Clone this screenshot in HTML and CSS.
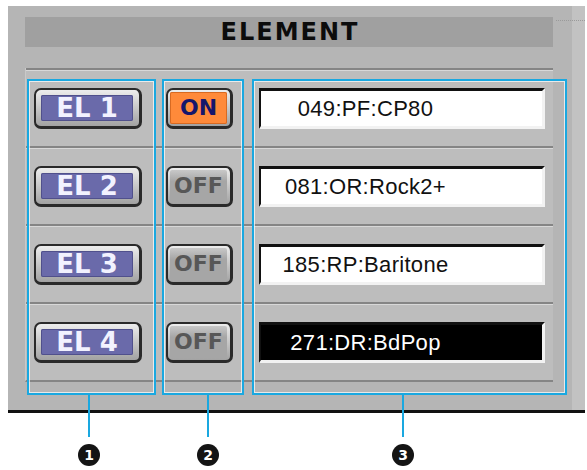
FILE: index.html
```html
<!DOCTYPE html>
<html>
<head>
<meta charset="utf-8">
<title>ELEMENT</title>
<link rel="stylesheet" href="styles.css">
</head>
<body>
<div class="page">
  <div class="panel">
    <div class="head-row">
      <div class="header">ELEMENT</div>
      <div class="dots"></div>
    </div>
    <div class="rows">
      <div class="row">
        <div class="btn el"><div class="face">EL 1</div></div>
        <div class="btn sw on"><div class="face">ON</div></div>
        <div class="field">049:PF:CP80</div>
      </div>
      <div class="row">
        <div class="btn el"><div class="face">EL 2</div></div>
        <div class="btn sw off"><div class="face">OFF</div></div>
        <div class="field">081:OR:Rock2+</div>
      </div>
      <div class="row">
        <div class="btn el"><div class="face">EL 3</div></div>
        <div class="btn sw off"><div class="face">OFF</div></div>
        <div class="field">185:RP:Baritone</div>
      </div>
      <div class="row">
        <div class="btn el"><div class="face">EL 4</div></div>
        <div class="btn sw off"><div class="face">OFF</div></div>
        <div class="field dark">271:DR:BdPop</div>
      </div>
    </div>
  </div>
  <div class="note n1"><span class="stem"></span><span class="num">1</span></div>
  <div class="note n2"><span class="stem"></span><span class="num">2</span></div>
  <div class="note n3"><span class="stem"></span><span class="num">3</span></div>
</div>
</body>
</html>
```

FILE: styles.css
```css
* { box-sizing: border-box; }

body {
  margin: 0;
  background: #ffffff;
  font-family: "DejaVu Sans", sans-serif;
}

.page {
  position: relative;
  width: 587px;
  height: 470px;
  padding-top: 6px;
}

.panel {
  margin-left: 8px;
  width: 577px;
  height: 407px;
  padding: 11px 0 0 17px;
  background: linear-gradient(to right, #b5b5b5 0, #b5b5b5 564px, #c2c2c2 564px);
  border-bottom: 3px solid #111111;
}

.head-row {
  display: flex;
  align-items: flex-start;
  height: 30px;
}

.header {
  width: 528px;
  height: 30px;
  background: #a0a0a0;
  display: flex;
  align-items: center;
  justify-content: center;
  padding-left: 2px;
  font: bold 24px "DejaVu Sans", sans-serif;
  letter-spacing: 2px;
  color: #0c0c0c;
}

.dots {
  margin: 3px 0 0 3px;
  width: 29px;
  border-top: 1px dotted #9a9a9a;
}

.rows {
  margin-top: 21px;
  width: 528px;
  background: #bdbdbd;
  border-bottom: 2px solid #858585;
  border-left: 1px solid #c9c9c9;
}

.row {
  height: 78px;
  border-top: 2px solid #858585;
  box-shadow: inset 0 1px 0 #d8d8d8;
  display: flex;
  align-items: center;
  padding-left: 8px;
}

.btn {
  height: 41px;
  border: 2px solid #2a2a2a;
  border-right-width: 3px;
  border-bottom-width: 3px;
  border-radius: 7px;
  background: linear-gradient(#ededed, #a2a2a2);
}

.face {
  height: 100%;
  display: flex;
  align-items: center;
  justify-content: center;
  line-height: 1;
  border-radius: 2px;
}

.el {
  width: 108px;
  padding: 5px 6px 5px 5px;
}

.el .face {
  background: #6a6aaa;
  box-shadow: inset 0 0 0 1px #50508c;
  color: #f2f2ff;
  font: bold 26px "DejaVu Sans", sans-serif;
  padding-top: 1px;
}

.sw {
  width: 67px;
  margin-left: 24px;
  padding: 2px 3px 2px 2px;
}

.sw .face {
  font: bold 22px "DejaVu Sans", sans-serif;
}

.on .face {
  background: #ff8a3a;
  box-shadow: inset 0 0 0 1px #d86a22;
  color: #16166c;
}

.off .face {
  background: linear-gradient(#c8c8c8, #a6a6a6 35%, #a6a6a6);
  color: #575757;
}

.field {
  width: 286px;
  height: 41px;
  margin-left: 26px;
  border-style: solid;
  border-width: 3px 3px 3px 2px;
  border-color: #111111 #f2f2f2 #f2f2f2 #111111;
  background: #ffffff;
  color: #111111;
  font: 22px "Liberation Sans", sans-serif;
  letter-spacing: 0.3px;
  display: flex;
  align-items: center;
  justify-content: center;
  padding-right: 72px;
  padding-top: 2px;
}

.field.dark {
  background: #000000;
  color: #ffffff;
}

.note {
  position: absolute;
  top: 79px;
  height: 316px;
  border: 2px solid #1aa8e0;
  box-shadow: inset 0 0 0 1px rgba(255, 255, 255, 0.7);
}

.n1 { left: 27px; width: 129px; }
.n2 { left: 162px; width: 82px; }
.n3 { left: 252px; width: 315px; }

.stem {
  position: absolute;
  top: calc(100% + 2px);
  width: 2px;
  height: 42px;
  background: #1aa8e0;
}

.n1 .stem { left: 59px; }
.n2 .stem { left: 43px; }
.n3 .stem { left: 148px; }

.num {
  position: absolute;
  top: calc(100% + 51px);
  width: 22px;
  height: 22px;
  border-radius: 50%;
  background: #141414;
  color: #ffffff;
  font: bold 14px "DejaVu Sans", sans-serif;
  display: flex;
  align-items: center;
  justify-content: center;
}

.n1 .num { left: 49px; }
.n2 .num { left: 33px; }
.n3 .num { left: 138px; }
```
